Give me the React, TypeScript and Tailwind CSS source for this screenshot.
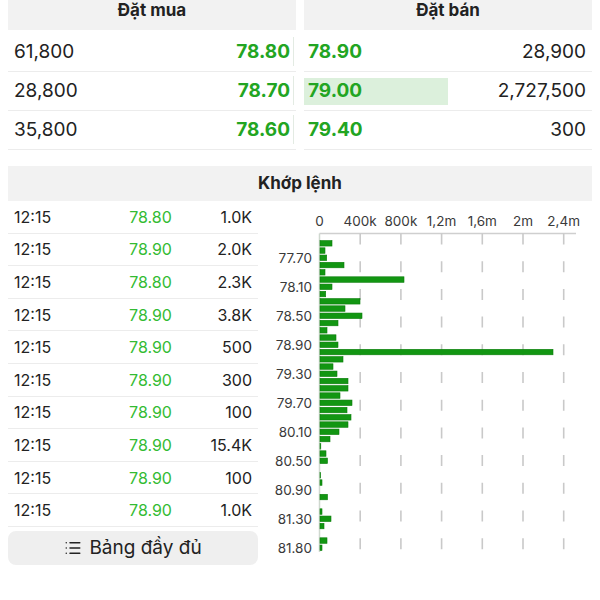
import { List } from "lucide-react";

const bids = [
  { qty: "61,800", price: "78.80" },
  { qty: "28,800", price: "78.70" },
  { qty: "35,800", price: "78.60" },
];

const asks = [
  { price: "78.90", qty: "28,900", bar: false },
  { price: "79.00", qty: "2,727,500", bar: true },
  { price: "79.40", qty: "300", bar: false },
];

const trades = [
  { time: "12:15", price: "78.80", vol: "1.0K" },
  { time: "12:15", price: "78.90", vol: "2.0K" },
  { time: "12:15", price: "78.80", vol: "2.3K" },
  { time: "12:15", price: "78.90", vol: "3.8K" },
  { time: "12:15", price: "78.90", vol: "500" },
  { time: "12:15", price: "78.90", vol: "300" },
  { time: "12:15", price: "78.90", vol: "100" },
  { time: "12:15", price: "78.90", vol: "15.4K" },
  { time: "12:15", price: "78.90", vol: "100" },
  { time: "12:15", price: "78.90", vol: "1.0K" },
];

// bar lengths in px, one per price step
const bars = [
  12, 5, 6.7, 24, 5, 84, 12, 5.7, 40, 25, 42, 18, 7, 16, 18, 233, 23, 13, 17, 28, 28, 20,
  32, 27, 31, 28, 19, 10, 0.8, 6, 7.5, 0, 0.6, 2, 0, 7.5, 0, 2, 11, 4, 0, 7, 2,
];

const priceLabels = ["77.70", "78.10", "78.50", "78.90", "79.30", "79.70", "80.10", "80.50", "80.90", "81.30", "81.80"];
const volLabels = ["0", "400k", "800k", "1,2m", "1,6m", "2m", "2,4m"];

function VolumeChart() {
  const x0 = 61.5;
  const step = 40.7;
  return (
    <svg width="334" height="360" className="block">
      {volLabels.map((l, i) => (
        <text
          key={l}
          x={x0 + i * step}
          y={25}
          textAnchor="middle"
          fontSize="13.5"
          fill="#3a3a3a"
          fontFamily="Inter, sans-serif"
        >
          {l}
        </text>
      ))}
      <line x1={x0} y1={32.5} x2={318} y2={32.5} stroke="#cfcfcf" strokeWidth="1.5" />
      {[1, 2, 3, 4, 5, 6].map((k) => (
        <line
          key={k}
          x1={x0 + k * step}
          y1={32.5}
          x2={x0 + k * step}
          y2={351}
          stroke="#c9c9c9"
          strokeWidth="1.6"
          strokeDasharray="11 16.7"
        />
      ))}
      <line x1={x0} y1={32.5} x2={x0} y2={351} stroke="#cfd8cf" strokeWidth="1.5" />
      {bars.map((w, i) =>
        w > 0 ? (
          <rect
            key={i}
            x={62}
            y={42.3 + i * 7.25 - 2.75}
            width={w}
            height={5.5}
            fill="#129612"
            stroke="#0b7d0b"
            strokeWidth="0.6"
          />
        ) : null
      )}
      {priceLabels.map((l, k) => (
        <text
          key={l}
          x={54}
          y={57 + k * 29 + 4.7}
          textAnchor="end"
          fontSize="13.5"
          fill="#3a3a3a"
          fontFamily="Inter, sans-serif"
        >
          {l}
        </text>
      ))}
    </svg>
  );
}

export default function App() {
  return (
    <div className="w-[600px] h-[600px] bg-white overflow-hidden font-[Inter,sans-serif] text-[#222]">
      <div className="flex gap-2 px-2">
        <div className="flex-1">
          <div className="h-[30px] bg-[#f2f2f2] text-center text-[17px] font-bold leading-[17px] pt-[1.5px]">
            Đặt mua
          </div>
          <div className="mt-[3px]">
            {bids.map((b) => (
              <div
                key={b.price}
                className="relative h-[39px] border-b border-[#ececec] flex items-center justify-between px-[6px] text-[19px]"
              >
                <div className="absolute right-[2px] top-[4px] bottom-[5px] w-[1.5px] bg-[#e3ebe3]" />
                <span className="relative">{b.qty}</span>
                <span className="relative font-bold text-[#22a522]">{b.price}</span>
              </div>
            ))}
          </div>
        </div>
        <div className="flex-1">
          <div className="h-[30px] bg-[#f2f2f2] text-center text-[17px] font-bold leading-[17px] pt-[1.5px]">
            Đặt bán
          </div>
          <div className="mt-[3px]">
            {asks.map((a) => (
              <div
                key={a.price}
                className="relative h-[39px] border-b border-[#ececec] flex items-center justify-between pl-[4px] pr-[6px] text-[19px]"
              >
                {a.bar && <div className="absolute left-0 top-[6px] bottom-[5px] w-1/2 bg-[#dcf0dc]" />}
                <span className="relative font-bold text-[#22a522]">{a.price}</span>
                <span className="relative">{a.qty}</span>
              </div>
            ))}
          </div>
        </div>
      </div>

      <div className="mx-2 mt-4 h-[35px] bg-[#f2f2f2] flex items-center justify-center text-[17px] font-bold">
        Khớp lệnh
      </div>

      <div className="flex pl-2">
        <div className="w-[250px] shrink-0">
          {trades.map((t, i) => (
            <div
              key={i}
              className="grid grid-cols-[100px_85px_1fr] items-center h-[32.6px] border-b border-[#ececec] text-[16px]"
            >
              <span className="pl-[6px]">{t.time}</span>
              <span className="text-center text-[#33bb33]">{t.price}</span>
              <span className="text-right pr-[6px]">{t.vol}</span>
            </div>
          ))}
          <button className="mt-[4px] w-full h-[34px] rounded-lg bg-[#efefef] flex items-center justify-center gap-[7px] text-[19px] text-[#222]">
            <List size={18} strokeWidth={2} />
            <span>Bảng đầy đủ</span>
          </button>
        </div>
        <div className="flex-1">
          <VolumeChart />
        </div>
      </div>
    </div>
  );
}
